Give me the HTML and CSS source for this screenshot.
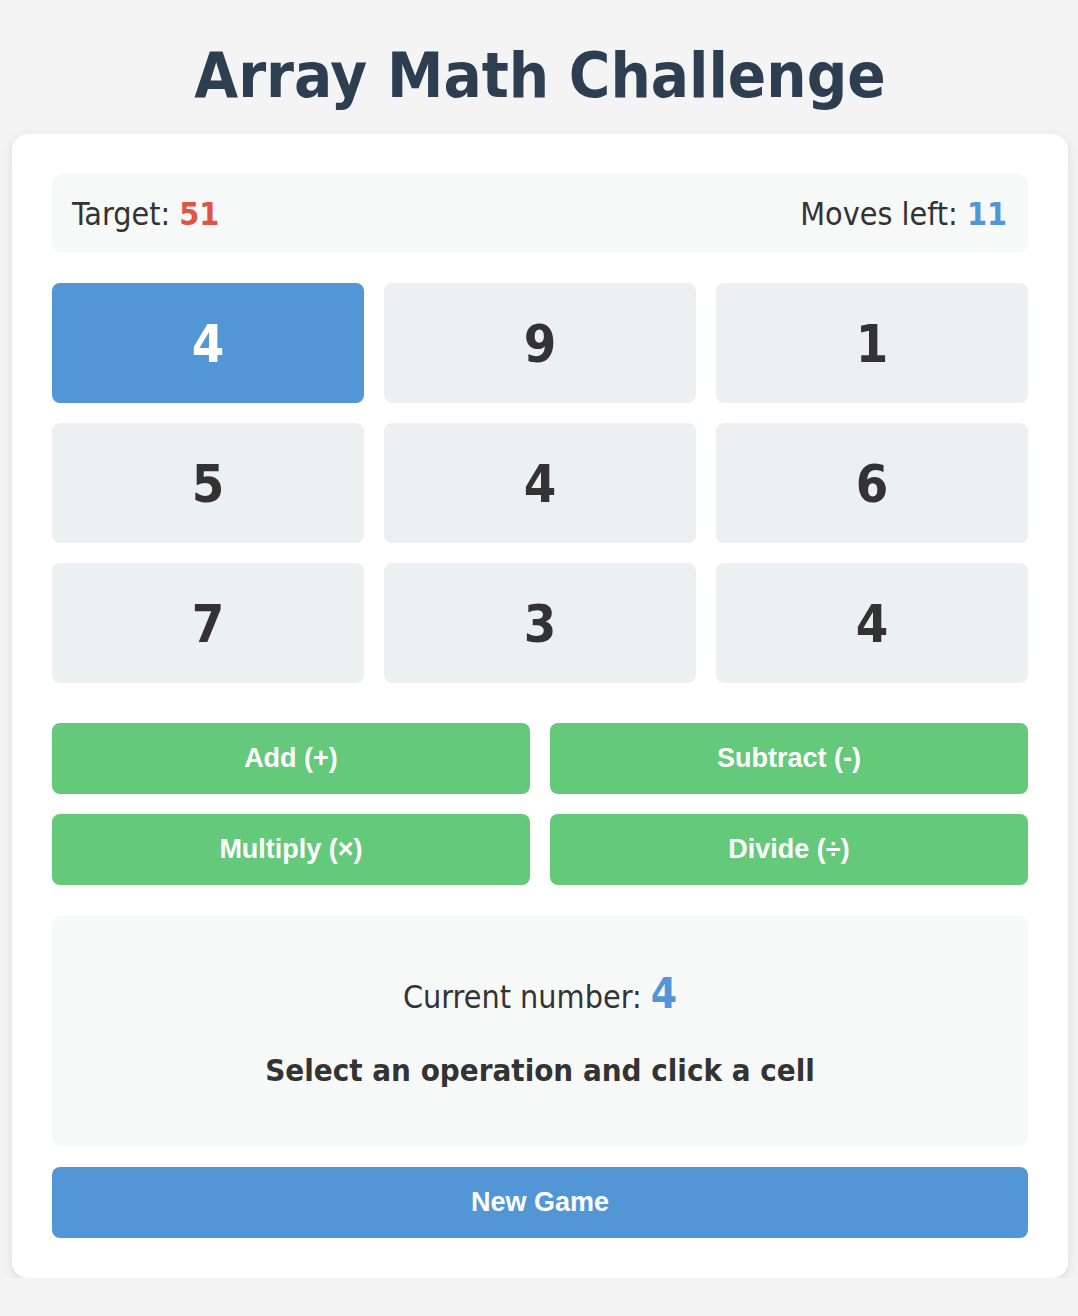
FILE: index.html
```html
<!DOCTYPE html>
<html>
<head>
<meta charset="utf-8">
<link rel="stylesheet" href="styles.css">
</head>
<body>
<h1 class="title">Array Math Challenge</h1>
<div class="card">
  <div class="info">
    <div class="info-item">Target: <span class="target">51</span></div>
    <div class="info-item">Moves left: <span class="moves">11</span></div>
  </div>
  <div class="grid">
    <div class="cell selected">4</div>
    <div class="cell">9</div>
    <div class="cell">1</div>
    <div class="cell">5</div>
    <div class="cell">4</div>
    <div class="cell">6</div>
    <div class="cell">7</div>
    <div class="cell">3</div>
    <div class="cell">4</div>
  </div>
  <div class="ops">
    <button class="op">Add (+)</button>
    <button class="op">Subtract (-)</button>
    <button class="op">Multiply (×)</button>
    <button class="op">Divide (÷)</button>
  </div>
  <div class="status">
    <div class="current">Current number: <span class="current-value">4</span></div>
    <div class="message">Select an operation and click a cell</div>
  </div>
  <button class="new-game">New Game</button>
</div>
</body>
</html>
```
FILE: styles.css
```css
html, body {
  margin: 0;
  padding: 0;
}
body {
  background: #f4f4f4;
  font-family: "DejaVu Sans Condensed", "DejaVu Sans", sans-serif;
  color: #333;
  padding: 0 10px 0 12px;
}
.title {
  margin: 37px 0 20px;
  font-size: 63px;
  line-height: 77px;
  text-align: center;
  color: #2c3e50;
  font-weight: bold;
}
.card {
  background: #fff;
  border-radius: 16px;
  padding: 40px;
  box-shadow: 0 4px 14px rgba(0, 0, 0, 0.1);
}
.info {
  display: flex;
  justify-content: space-between;
  align-items: center;
  height: 79px;
  padding: 0 21px 0 20px;
  background: #f7f9f9;
  border-radius: 10px;
  font-size: 32px;
  margin-bottom: 30px;
}
.target {
  color: #e05444;
  font-weight: bold;
}
.moves {
  color: #5296d6;
  font-weight: bold;
}
.grid {
  display: grid;
  grid-template-columns: repeat(3, 1fr);
  grid-auto-rows: 120px;
  gap: 20px;
  margin-bottom: 40px;
}
.cell {
  display: flex;
  align-items: center;
  justify-content: center;
  background: #ecf0f1;
  border-radius: 8px;
  font-size: 52px;
  font-weight: bold;
  color: #333;
  padding-top: 2px;
}
.cell.selected {
  background: #5296d6;
  color: #fff;
}
.ops {
  display: grid;
  grid-template-columns: 1fr 1fr;
  grid-auto-rows: 71px;
  gap: 20px;
  margin-bottom: 30px;
}
.op, .new-game {
  border: none;
  border-radius: 8px;
  color: #fff;
  font-family: "Liberation Sans", Arial, sans-serif;
  font-weight: bold;
  font-size: 27px;
  cursor: pointer;
}
.op {
  background: #65c97b;
}
.status {
  height: 231px;
  box-sizing: border-box;
  padding-bottom: 4px;
  background: #f7f9f9;
  border-radius: 10px;
  display: flex;
  flex-direction: column;
  align-items: center;
  justify-content: center;
  gap: 30px;
  margin-bottom: 21px;
}
.current {
  font-size: 32px;
  line-height: 49px;
}
.current-value {
  color: #5296d6;
  font-weight: bold;
  font-size: 42px;
}
.message {
  font-size: 31px;
  line-height: 36px;
  font-weight: bold;
}
.new-game {
  display: block;
  width: 100%;
  height: 71px;
  background: #5296d6;
}
```
